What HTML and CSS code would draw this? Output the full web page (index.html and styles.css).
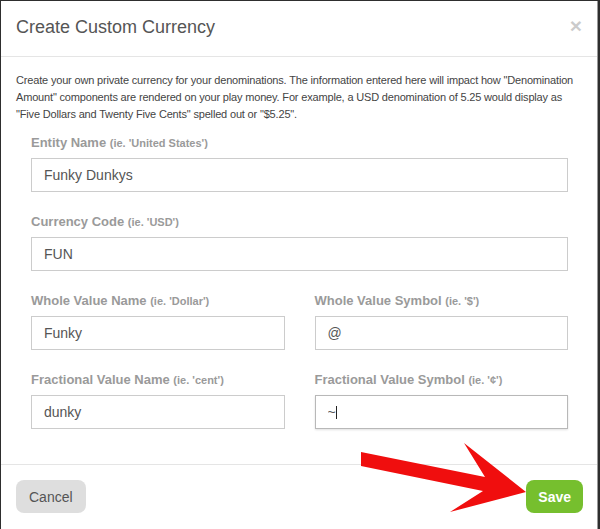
FILE: index.html
```html
<!DOCTYPE html>
<html>
<head>
<meta charset="utf-8">
<link rel="stylesheet" href="styles.css">
</head>
<body>
<div class="modal">
  <div class="modal-header">
    <h4 class="modal-title">Create Custom Currency</h4>
    <span class="close">&times;</span>
  </div>
  <div class="modal-body">
    <p class="intro">Create your own private currency for your denominations. The information entered here will impact how "Denomination<br>Amount" components are rendered on your play money. For example, a USD denomination of 5.25 would display as<br>"Five Dollars and Twenty Five Cents" spelled out or "$5.25".</p>
    <div class="form">
      <div class="group">
        <label>Entity Name <small>(ie. 'United States')</small></label>
        <input class="field" type="text" value="Funky Dunkys">
      </div>
      <div class="group">
        <label>Currency Code <small>(ie. 'USD')</small></label>
        <input class="field" type="text" value="FUN">
      </div>
      <div class="row">
        <div class="group">
          <label>Whole Value Name <small>(ie. 'Dollar')</small></label>
          <input class="field" type="text" value="Funky">
        </div>
        <div class="group">
          <label>Whole Value Symbol <small>(ie. '$')</small></label>
          <input class="field" type="text" value="@">
        </div>
      </div>
      <div class="row last">
        <div class="group">
          <label>Fractional Value Name <small>(ie. 'cent')</small></label>
          <input class="field" type="text" value="dunky">
        </div>
        <div class="group">
          <label>Fractional Value Symbol <small>(ie. '¢')</small></label>
          <div class="field-wrap">
            <input class="field focused" type="text" value="~">
            <span class="caret"></span>
          </div>
        </div>
      </div>
    </div>
  </div>
  <div class="modal-footer">
    <button class="btn btn-cancel">Cancel</button>
    <button class="btn btn-save">Save</button>
  </div>
</div>
<svg class="arrow" width="600" height="529" viewBox="0 0 600 529">
  <polygon points="361,452 485,477 464,443 526,492 450,512 483,491 361,466" fill="#f00e0e"/>
</svg>
</body>
</html>
```
FILE: styles.css
```css
html, body {
  margin: 0;
  padding: 0;
}
body {
  background: #2e2e2e;
  font-family: "Liberation Sans", Arial, sans-serif;
  width: 600px;
  height: 529px;
  overflow: hidden;
  position: relative;
}
.modal {
  margin: 1px 2px 0 1px;
  background: #fff;
  height: 528px;
  box-sizing: border-box;
  border-right: 1px solid #9a9a9a;
}
.modal-header {
  display: flex;
  justify-content: space-between;
  align-items: center;
  padding: 14px 14px 16px 15px;
  border-bottom: 1px solid #e5e5e5;
}
.modal-title {
  margin: 0;
  font-size: 18px;
  font-weight: normal;
  line-height: 25px;
  color: #555;
}
.close {
  font-size: 21px;
  font-weight: bold;
  line-height: 1;
  color: #000;
  opacity: 0.2;
  margin-top: -4px;
  margin-right: 1px;
}
.modal-body {
  padding: 15px 14px 15px 15px;
}
.intro {
  margin: 0 0 11px 0;
  font-size: 11px;
  line-height: 17px;
  color: #444;
  white-space: nowrap;
  letter-spacing: -0.17px;
}
.form {
  padding: 0 15px;
}
.row {
  display: grid;
  grid-template-columns: 1fr 1fr;
  column-gap: 30px;
}
.group {
  display: flex;
  flex-direction: column;
  margin-bottom: 21px;
}
.row.last .group {
  margin-bottom: 20px;
}
label {
  font-size: 13px;
  font-weight: bold;
  line-height: 18px;
  color: #9a9a9a;
  margin-bottom: 6px;
}
label small {
  font-size: 11px;
}
.field {
  box-sizing: border-box;
  width: 100%;
  height: 34px;
  padding: 6px 12px;
  border: 1px solid #ccc;
  border-radius: 0;
  font-family: "Liberation Sans", Arial, sans-serif;
  font-size: 14px;
  color: #555;
  background: #fff;
  outline: none;
  margin: 0;
}
.field.focused {
  border-color: #b8b8b8;
  box-shadow: 0 1px 2px rgba(0,0,0,0.12);
}
.field-wrap {
  position: relative;
}
.caret {
  position: absolute;
  left: 21px;
  top: 11px;
  width: 1px;
  height: 13px;
  background: #222;
}
.modal-footer {
  display: flex;
  justify-content: space-between;
  padding: 15px 14px 15px 15px;
  border-top: 1px solid #e5e5e5;
}
.btn {
  height: 33px;
  border: none;
  border-radius: 8px;
  font-family: "Liberation Sans", Arial, sans-serif;
  font-size: 14px;
  padding: 0 13px;
  margin: 0;
}
.btn-cancel {
  background: #dedede;
  color: #555;
}
.btn-save {
  background: #76bf2e;
  color: #fff;
  font-weight: bold;
  padding: 0 12px;
}
.arrow {
  position: absolute;
  left: 0;
  top: 0;
  pointer-events: none;
}
```
